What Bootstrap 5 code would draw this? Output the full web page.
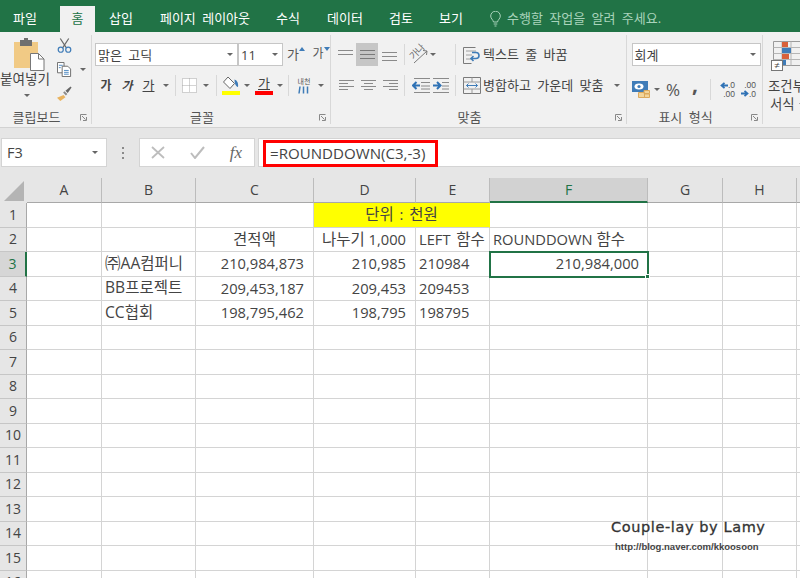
<!DOCTYPE html>
<html lang="ko">
<head>
<meta charset="utf-8">
<title>Excel</title>
<link href="https://cdn.jsdelivr.net/npm/bootstrap@5.3.0/dist/css/bootstrap.min.css" rel="stylesheet">
<style>
html,body{height:578px;overflow:hidden}
body{font-family:"Open Sans","Noto Sans CJK KR",sans-serif;font-size:13px;color:#444;background:#fff;width:800px}
svg{display:block}
/* tabs */
.xl-tabs{background:#217346;height:32px;grid-template-columns:60px 35px 52px 116px 50px 64px 48px 52px 1fr;align-items:end;word-spacing:3px}
.xl-tab{height:26px;line-height:25px;padding:0;text-align:center;color:#fff;text-decoration:none;display:block}
.xl-tab.first{width:50px}
.xl-tab.on{background:#f1f1f1;color:#217346}
.xl-tip{color:#a9d3bb;height:26px;padding-left:13px;gap:6px}
/* ribbon */
.xl-ribbon{height:96px;background:#f1f1f1;border-bottom:1px solid #d2d2d2;word-spacing:3px}
.rb-group{height:89px;margin-top:3px;border-right:1px solid #d8d8d8;flex:none}
.g-clip{width:92px}.g-font{width:239px}.g-align{width:296px}.g-num{width:136px}.g-style{flex:1;overflow:hidden;border-right:0;position:relative}
.rb-body{height:73px;padding-top:8px}
.rb-label{height:18px;display:grid;grid-template-columns:1fr auto 1fr;align-items:center;color:#555;line-height:18px;padding-right:18px}
.rb-launch{justify-self:end;margin-right:-14px}
.rb-row{display:grid;height:23px;align-items:center;justify-items:center}
.rb-row+.rb-row{margin-top:8px}
.caret-dn{width:0;height:0;border-left:3px solid transparent;border-right:3px solid transparent;border-top:3px solid #666;display:block}
.rb-sep{width:1px;height:21px;background:#d8d8d8}
.rb-combo{background:#fff;border:1px solid #c6c6c6;height:23px;padding:0 4px 0 2px;line-height:20px;color:#444}
.clip-wrap{padding-top:3px;height:73px;grid-template-columns:53px 1fr}
.clip-main{width:53px}
.clip-pic{margin-left:5px}
.clip-name{line-height:15px;margin-top:0;white-space:nowrap;font-size:13.6px;width:53px;padding-left:0}
.clip-main .caret-dn{margin-top:8px}
.clip-small{padding:0 0 0 4px;gap:9px}
.font-r1{grid-template-columns:3px 143px 45px 26px 24px 1fr;justify-items:stretch}
.font-r1>.grow-a{justify-self:center}
.font-r2{grid-template-columns:4px 20px 22px 21px 13px 6px 23px 10px 10px 20px 12px 22px 10px 6px 26px 7px 1fr}
.grow-a{display:flex;align-items:flex-start;line-height:16px;height:18px;font-size:12px;color:#555;gap:0}
.grow-a.lg{font-size:13px}
.grow-a svg{margin-top:1px}
.bv{font-weight:700;font-size:12px;line-height:1;color:#444}
.bv.i{font-style:italic}
.bv.u{text-decoration:underline;font-weight:400;font-size:13px}
.swatch{width:18px;display:flex;flex-direction:column;align-items:center}
.swatch b{display:block;width:18px;height:4px}
.swatch .yl{background:#ff0}
.swatch .rd{background:#f00}
.swatch .gl{line-height:14px;font-size:13px;height:15px;text-decoration:underline;text-underline-offset:1px}
.nae{display:flex;flex-direction:column;align-items:center}
.nae span{font-size:7px;line-height:8px;word-spacing:0;color:#555}
.al-r1{grid-template-columns:7px 15px 3px 22px 4px 15px 7px 1px 5px 20px 0 6px 19px 1px 7px 17px 3px 1fr}
.al-r2{grid-template-columns:8px 15px 7px 15px 7px 15px 6px 1px 6px 19px 2px 19px 4px 1px 7px 17px 3px 1fr 9px 9px 6px}
.al-r1>span.tx,.al-r2>span.tx{justify-self:start;white-space:nowrap;color:#444}
.al-on{width:22px;height:23px;background:#c6c6c6;display:flex;align-items:center;justify-content:center}
.orient{width:20px;height:20px;position:relative}
.orient span{position:absolute;left:-1px;top:1px;font-size:9.5px;line-height:12px;color:#666;transform:rotate(-45deg);white-space:nowrap;word-spacing:0;letter-spacing:-.5px}
.orient svg{position:absolute;left:0;top:0}
.num-r1{padding-left:3px;display:block}
.num-r1 .rb-combo{width:129px}
.num-r2{grid-template-columns:4px 19px 3px 8px 24px 0 20px 5px 1px 8px 16px 5px 16px 1fr}
.pct{font-size:17px;line-height:1;color:#555}
.cma{font-size:21px;font-weight:700;line-height:1;color:#555;padding-bottom:10px}
.deci{font-family:"Liberation Sans",sans-serif;font-size:8.5px;line-height:8.5px;width:16px;color:#555}
.deci div{display:flex;justify-content:flex-end;align-items:center;gap:0}
.sty-pad{padding-left:10px}
.sty-pic{margin-top:6px}
.sty-neq{position:absolute;left:8px;top:25px;width:12px;height:11px;background:#fff;border:1px solid #777;font-size:10px;line-height:9px;text-align:center;color:#444}
.sty-name{margin-top:11px;margin-left:-5px;line-height:18px;white-space:nowrap;font-size:13.4px}
.sty-line2{padding-left:2px;display:flex;align-items:center;gap:4px}
/* formula */
.xl-fbar{background:#e6e6e6;height:50px;padding:10px 0 0 1px}
.xl-namebox{width:106px;height:29px;background:#fff;border:1px solid #d4d4d4;padding:0 8px 0 5px;font-size:14.5px;color:#444}
.xl-dots{width:32px;height:29px;gap:3px}
.xl-dots i{width:2px;height:2px;background:#8a8a8a;display:block}
.xl-fxbox{width:116px;height:29px;background:#fff;border:1px solid #d4d4d4;padding:0 12px 0 11px}
.xl-fx{font-family:"Liberation Serif",serif;font-style:italic;font-size:17px;color:#666;line-height:1}
.xl-input{height:29px;background:#fff;border:1px solid #d4d4d4;border-right:0;margin-left:3px;flex:1;padding:1px 0 0 4px}
.xl-redbox{width:175px;height:27px;border:3px solid #f00;padding-left:4px;font-size:15.1px;line-height:20px;color:#444;white-space:nowrap}
/* sheet */
.xl-grid{grid-template-columns:27px 75px 94px 118px 102px 74px 158px 75px 74px 1fr;grid-template-rows:25px repeat(16,24.5px);font-size:14.7px;color:#444;line-height:1}
.c{border-right:1px solid #d4d4d4;border-bottom:1px solid #d4d4d4;display:flex;align-items:center;padding:0 3px;white-space:nowrap;overflow:visible;min-width:0}
.c.r{justify-content:flex-end;padding-right:9px}
.c.m{justify-content:center}
.ko{font-size:15.5px}
.wide{word-spacing:2px}
.lat{font-size:15.6px}
.h{background:#e6e6e6;border-right-color:#bcbcbc;border-bottom-color:#a8a8a8;justify-content:center;font-size:14px;color:#444;padding:0}
.rh{background:#e6e6e6;border-right-color:#a8a8a8;border-bottom-color:#c6c6c6;justify-content:center;font-size:14px;color:#444;padding:0}
.h.on{background:#d2d2d2;color:#217346;border-bottom:2px solid #217346}
.rh.on{background:#d6d6d6;color:#217346;border-right:2px solid #217346}
.ylw{background:#ff0;grid-column:span 2;justify-content:center;border-right-color:#ff0}
.sel{position:relative;padding-right:8px!important}
.sel::before{content:"";position:absolute;left:-1px;top:-1px;right:-2px;bottom:-2px;border:2px solid #217346;pointer-events:none}
.sel::after{content:"";position:absolute;right:-3px;bottom:-3px;background:#217346;border:1px solid #fff;box-sizing:content-box;width:3px;height:3px}
.xl-sheet{position:relative}
.mark-a{position:absolute;left:611px;top:339px;font-family:"DejaVu Sans",sans-serif;font-size:14.5px;letter-spacing:.6px;color:#333;white-space:nowrap;line-height:20px;-webkit-text-stroke:.3px #333}
.mark-b{position:absolute;left:615px;top:363px;font-family:"Liberation Sans",sans-serif;font-weight:700;font-size:9.5px;color:#444;white-space:nowrap;line-height:12px}
.corner{width:100%;height:100%;padding:3px 1px 2px 4px}
</style>
</head>
<body>

<nav class="xl-tabs d-grid">
  <a class="xl-tab first" href="#">파일</a>
  <a class="xl-tab on" href="#">홈</a>
  <a class="xl-tab" href="#">삽입</a>
  <a class="xl-tab" href="#">페이지 레이아웃</a>
  <a class="xl-tab" href="#">수식</a>
  <a class="xl-tab" href="#">데이터</a>
  <a class="xl-tab" href="#">검토</a>
  <a class="xl-tab" href="#">보기</a>
  <div class="xl-tip d-flex align-items-center">
    <svg width="11" height="16" viewBox="0 0 11 16" fill="none" stroke="#a9d3bb"><path d="M3.500 11C3 8.500.7 7.800.7 5a4.800 4.800 0 0 1 9.600 0c0 2.800-2.300 3.500-2.800 6zM3.700 13h3.600M4.500 15h2"/></svg>
    <span>수행할 작업을 알려 주세요.</span>
  </div>
</nav>

<section class="xl-ribbon d-flex">
  <!-- clipboard -->
  <div class="rb-group g-clip">
    <div class="d-grid clip-wrap">
      <div class="clip-main d-flex flex-column align-items-center">
        <svg class="clip-pic" width="31" height="33" viewBox="0 0 31 33"><rect x="0" y="4" width="24" height="26" fill="#f1ca85"/><rect x="6" y="2" width="12" height="6" fill="#6f6f6f"/><rect x="10" y="0" width="4" height="3" fill="#6f6f6f"/><path d="M16.500 15.500h8l5.500 5.500v11.500h-13.500z" fill="#fff" stroke="#777"/><path d="M24.500 15.500v5.500h5.500" fill="none" stroke="#777"/></svg>
        <div class="clip-name">붙여넣기</div>
        <i class="caret-dn"></i>
      </div>
      <div class="clip-small d-flex flex-column">
        <svg width="15" height="15" viewBox="0 0 16 16" fill="none"><path d="M3.500.5l6.500 10M12.500.5L6 10.500" stroke="#6a6a6a" stroke-width="1.300"/><circle cx="4" cy="12.500" r="2.700" stroke="#3f7cb8" stroke-width="1.300"/><circle cx="12" cy="12.500" r="2.700" stroke="#3f7cb8" stroke-width="1.300"/></svg>
        <div class="d-flex align-items-center gap-2">
          <svg width="15" height="15" viewBox="0 0 16 16" fill="#fff" stroke="#6a6a6a"><path d="M.5.5h7v11h-7z"/><path d="M5.500 4.500h6l3 3v8h-9z"/><path d="M2 3.500h4M2 6h2M7.500 9h5M7.500 11h5M7.500 13h5" stroke="#4a86c0"/></svg>
          <i class="caret-dn"></i>
        </div>
        <svg width="15" height="15" viewBox="0 0 16 16"><path d="M7 9.500l-7 3 3.500 3.500 5.500-4z" fill="#e9b35f"/><path d="M6.500 7l3 3 1.500-1.500-3-3z" fill="#8a8a8a"/><path d="M9 5l2.500 2.500L15.500 1.500 14.500.5z" fill="#666"/></svg>
      </div>
    </div>
    <div class="rb-label"><i></i><span>클립보드</span>
      <svg class="rb-launch" width="7" height="7" viewBox="0 0 7 7" fill="none" stroke="#888"><path d="M.5 6.500V.5h6M2 2l3.500 3.500M6.500 3v3.500H3"/></svg></div>
  </div>

  <!-- font -->
  <div class="rb-group g-font">
    <div class="rb-body">
      <div class="rb-row font-r1">
        <i></i>
        <div class="rb-combo d-flex align-items-center justify-content-between"><span>맑은 고딕</span><i class="caret-dn"></i></div>
        <div class="rb-combo d-flex align-items-center justify-content-between"><span>11</span><i class="caret-dn"></i></div>
        <div class="grow-a lg"><span>가</span><svg width="6" height="4" viewBox="0 0 6 4"><path d="M3 0l3 4H0z" fill="#3f7cb8"/></svg></div>
        <div class="grow-a"><span>가</span><svg width="6" height="4" viewBox="0 0 6 4"><path d="M3 4L0 0h6z" fill="#3f7cb8"/></svg></div>
      </div>
      <div class="rb-row font-r2">
        <i></i>
        <span class="bv">가</span><span class="bv i">가</span><span class="bv u">가</span><i class="caret-dn"></i>
        <i class="rb-sep"></i>
        <svg width="15" height="15" viewBox="0 0 15 15" fill="#fff" stroke="#a8a8a8" stroke-dasharray="1 1"><path d="M.5.500h14v14H.5zM7.500.500v14M.5 7.500h14"/></svg>
        <i class="caret-dn"></i>
        <i class="rb-sep"></i>
        <div class="swatch"><svg width="16" height="15" viewBox="0 0 16 15"><path d="M5 1l6.500 6.500L7 12.500.5 6z" fill="#fff" stroke="#666"/><path d="M11.500 3.500c3 1 4 4 3.500 7.500-2.500-.5-3.500-4-3.500-7.500z" fill="#3f7cb8"/></svg><b class="yl"></b></div>
        <i class="caret-dn"></i>
        <div class="swatch"><span class="gl">가</span><b class="rd"></b></div>
        <i class="caret-dn"></i>
        <i class="rb-sep"></i>
        <div class="nae"><span>내천</span><svg width="11" height="8" viewBox="0 0 11 8"><path d="M2 .5L1 7.500M5.500.5v7M9.500.5v7" stroke="#3f7cb8" stroke-width="1.500"/></svg></div>
        <i class="caret-dn"></i>
      </div>
    </div>
    <div class="rb-label"><i></i><span>글꼴</span>
      <svg class="rb-launch" width="7" height="7" viewBox="0 0 7 7" fill="none" stroke="#888"><path d="M.5 6.500V.5h6M2 2l3.500 3.500M6.500 3v3.500H3"/></svg></div>
  </div>

  <!-- alignment -->
  <div class="rb-group g-align">
    <div class="rb-body">
      <div class="rb-row al-r1">
        <i></i>
        <svg width="15" height="12" viewBox="0 0 15 12" stroke="#8a8a8a"><path d="M0 1.500h15M0 5.500h15"/></svg>
        <i></i>
        <div class="al-on"><svg width="15" height="10" viewBox="0 0 15 10" stroke="#7a7a7a"><path d="M0 .5h15M0 4.500h15M0 8.500h15"/></svg></div>
        <i></i>
        <svg width="15" height="12" viewBox="0 0 15 12" stroke="#8a8a8a"><path d="M0 3.500h15M0 7.500h15M0 11.500h15"/></svg>
        <i></i>
        <i class="rb-sep"></i>
        <i></i>
        <div class="orient"><span>가나</span><svg width="20" height="20" viewBox="0 0 20 20" fill="none" stroke="#7a7a7a"><path d="M4 18L17 6M13 5.500l4 .5-.5 4"/></svg></div>
        <i></i>
        <i class="caret-dn"></i>
        <i></i>
        <i class="rb-sep"></i>
        <i></i>
        <svg width="17" height="18" viewBox="0 0 17 18" fill="none"><path d="M.5 1.500h12M.5 17.500h8M.5 1.500v16" stroke="#7a7a7a"/><path d="M3 5h10M3 9h6M3 13h5" stroke="#a0a0a0"/><path d="M9 12.500h4c4 0 4-6 0-6H9M10.500 10l-2.500 2.500 2.500 2.500" stroke="#3f7cb8" stroke-width="1.600"/></svg>
        <i></i>
        <span class="tx">텍스트 줄 바꿈</span>
      </div>
      <div class="rb-row al-r2">
        <i></i>
        <svg width="15" height="11" viewBox="0 0 15 11" stroke="#8a8a8a"><path d="M0 .5h15M0 3.500h9M0 6.500h15M0 9.500h9"/></svg>
        <i></i>
        <svg width="15" height="11" viewBox="0 0 15 11" stroke="#8a8a8a"><path d="M0 .5h15M3 3.500h9M0 6.500h15M3 9.500h9"/></svg>
        <i></i>
        <svg width="15" height="11" viewBox="0 0 15 11" stroke="#8a8a8a"><path d="M0 .5h15M6 3.500h9M0 6.500h15M6 9.500h9"/></svg>
        <i></i>
        <i class="rb-sep"></i>
        <i></i>
        <svg width="18" height="15" viewBox="0 0 18 15" fill="none"><path d="M2 .5h16M9 4.500h9M9 8h9M9 11h9M2 14.500h16" stroke="#8a8a8a"/><path d="M8 7.500H1.500M4.500 4L1 7.500 4.500 11" stroke="#2f72b5" stroke-width="2"/></svg>
        <i></i>
        <svg width="18" height="15" viewBox="0 0 18 15" fill="none"><path d="M0 .5h16M9 4.500h7M9 8h7M9 11h7M0 14.500h16" stroke="#8a8a8a"/><path d="M0 7.500h7M4 4l3.500 3.500L4 11" stroke="#2f72b5" stroke-width="2"/></svg>
        <i></i>
        <i class="rb-sep"></i>
        <i></i>
        <svg width="18" height="17" viewBox="0 0 18 17" fill="none"><path d="M.5.500h17v16H.5z" stroke="#7a7a7a"/><path d="M.5 5h17M.5 12h17M9 .5V5M9 12v4.500" stroke="#9a9a9a"/><path d="M3.500 8.500h11M5.500 6.500l-2 2 2 2M12.500 6.500l2 2-2 2" stroke="#3f7cb8"/></svg>
        <i></i>
        <span class="tx">병합하고 가운데 맞춤</span>
        <i></i>
        <i class="caret-dn"></i>
      </div>
    </div>
    <div class="rb-label"><i></i><span>맞춤</span>
      <svg class="rb-launch" width="7" height="7" viewBox="0 0 7 7" fill="none" stroke="#888"><path d="M.5 6.500V.5h6M2 2l3.500 3.500M6.500 3v3.500H3"/></svg></div>
  </div>

  <!-- number -->
  <div class="rb-group g-num">
    <div class="rb-body">
      <div class="rb-row num-r1">
        <div class="rb-combo d-flex align-items-center justify-content-between"><span>회계</span><i class="caret-dn"></i></div>
      </div>
      <div class="rb-row num-r2">
        <i></i>
        <svg width="18" height="19" viewBox="0 0 18 19"><rect x="0" y="1" width="16" height="11" fill="#3f7cb8"/><ellipse cx="7" cy="6.500" rx="4.500" ry="3" fill="#fff"/><circle cx="7" cy="6.500" r="1.600" fill="#3f7cb8"/><path d="M6.500 12.500h6v5h-6zM12 10.500h5.500v3H12zM12.500 14h5v3.500h-5z" fill="#f3d59b" stroke="#dca95c"/></svg>
        <i></i>
        <i class="caret-dn"></i>
        <span class="pct">%</span>
        <i></i>
        <span class="cma">,</span>
        <i></i>
        <i class="rb-sep"></i>
        <i></i>
        <div class="deci"><div><svg width="8" height="7" viewBox="0 0 8 7" fill="none" stroke="#2f72b5" stroke-width="1.800"><path d="M8 3.500H2M4.500.8L1.500 3.500l3 2.700"/></svg><span>.0</span></div><div><span>.00</span></div></div>
        <i></i>
        <div class="deci"><div><span>.00</span></div><div><svg width="8" height="7" viewBox="0 0 8 7" fill="none" stroke="#2f72b5" stroke-width="1.800"><path d="M0 3.500h6M3.500.8l3 2.700-3 2.700"/></svg><span>.0</span></div></div>
      </div>
    </div>
    <div class="rb-label"><i></i><span>표시 형식</span>
      <svg class="rb-launch" width="7" height="7" viewBox="0 0 7 7" fill="none" stroke="#888"><path d="M.5 6.500V.5h6M2 2l3.500 3.500M6.500 3v3.500H3"/></svg></div>
  </div>

  <!-- styles -->
  <div class="rb-group g-style">
    <div class="sty-pad">
      <svg class="sty-pic" width="28" height="25" viewBox="0 0 28 25" fill="none"><path d="M.5.500h27v24H.5z" stroke="#9a9a9a"/><path d="M.5 6.500h27M.5 12.500h27M.5 18.500h27M9 .5v24M18 .5v24" stroke="#b5b5b5"/><rect x="9" y="1" width="6" height="5" fill="#d9613a"/><rect x="9" y="7" width="9" height="5" fill="#3f7cb8"/><rect x="9" y="13" width="7" height="5" fill="#d9613a"/><rect x="9" y="19" width="4" height="5" fill="#3f7cb8"/></svg>
      <div class="sty-neq">≠</div>
      <div class="sty-name">조건부<div class="sty-line2">서식 <i class="caret-dn"></i></div></div>
    </div>
  </div>
</section>

<section class="xl-fbar d-flex align-items-start">
  <div class="xl-namebox d-flex align-items-center justify-content-between"><span>F3</span><i class="caret-dn"></i></div>
  <div class="xl-dots d-flex flex-column align-items-center justify-content-center"><i></i><i></i><i></i></div>
  <div class="xl-fxbox d-flex align-items-center justify-content-between">
    <svg width="14" height="13" viewBox="0 0 14 13" stroke="#bdbdbd" stroke-width="1.800"><path d="M1 1l12 11M13 1L1 12"/></svg>
    <svg width="15" height="13" viewBox="0 0 15 13" fill="none" stroke="#bdbdbd" stroke-width="2"><path d="M1 7l4 5 9-11"/></svg>
    <span class="xl-fx">fx</span>
  </div>
  <div class="xl-input"><div class="xl-redbox">=ROUNDDOWN(C3,-3)</div></div>
</section>

<section class="xl-sheet">
  <div class="xl-grid d-grid">
    <div class="h corner"><svg width="20" height="20" viewBox="0 0 20 20"><path d="M20 0v20H0z" fill="#b4b4b4"/></svg></div>
    <div class="c h">A</div><div class="c h">B</div><div class="c h">C</div><div class="c h">D</div><div class="c h">E</div><div class="c h on">F</div><div class="c h">G</div><div class="c h">H</div><div class="c h"></div>

    <div class="c rh">1</div><div class="c"></div><div class="c"></div><div class="c"></div><div class="c ylw"><span class="wide"><span class="ko">단위</span> : <span class="ko">천원</span></span></div><div class="c"></div><div class="c"></div><div class="c"></div><div class="c"></div>
    <div class="c rh">2</div><div class="c"></div><div class="c"></div><div class="c m"><span class="ko">견적액</span></div><div class="c r"><span><span class="ko">나누기</span> 1,000</span></div><div class="c"><span class="wide">LEFT <span class="ko">함수</span></span></div><div class="c"><span>ROUNDDOWN <span class="ko">함수</span></span></div><div class="c"></div><div class="c"></div><div class="c"></div>
    <div class="c rh on">3</div><div class="c"></div><div class="c"><span><span class="ko">㈜</span><span class="lat">AA</span><span class="ko">컴퍼니</span></span></div><div class="c r">210,984,873</div><div class="c r">210,985</div><div class="c">210984</div><div class="c r sel">210,984,000</div><div class="c"></div><div class="c"></div><div class="c"></div>
    <div class="c rh">4</div><div class="c"></div><div class="c"><span><span class="lat">BB</span><span class="ko">프로젝트</span></span></div><div class="c r">209,453,187</div><div class="c r">209,453</div><div class="c">209453</div><div class="c"></div><div class="c"></div><div class="c"></div><div class="c"></div>
    <div class="c rh">5</div><div class="c"></div><div class="c"><span><span class="lat">CC</span><span class="ko">협회</span></span></div><div class="c r">198,795,462</div><div class="c r">198,795</div><div class="c">198795</div><div class="c"></div><div class="c"></div><div class="c"></div><div class="c"></div>
    <div class="c rh">6</div><div class="c"></div><div class="c"></div><div class="c"></div><div class="c"></div><div class="c"></div><div class="c"></div><div class="c"></div><div class="c"></div><div class="c"></div>
    <div class="c rh">7</div><div class="c"></div><div class="c"></div><div class="c"></div><div class="c"></div><div class="c"></div><div class="c"></div><div class="c"></div><div class="c"></div><div class="c"></div>
    <div class="c rh">8</div><div class="c"></div><div class="c"></div><div class="c"></div><div class="c"></div><div class="c"></div><div class="c"></div><div class="c"></div><div class="c"></div><div class="c"></div>
    <div class="c rh">9</div><div class="c"></div><div class="c"></div><div class="c"></div><div class="c"></div><div class="c"></div><div class="c"></div><div class="c"></div><div class="c"></div><div class="c"></div>
    <div class="c rh">10</div><div class="c"></div><div class="c"></div><div class="c"></div><div class="c"></div><div class="c"></div><div class="c"></div><div class="c"></div><div class="c"></div><div class="c"></div>
    <div class="c rh">11</div><div class="c"></div><div class="c"></div><div class="c"></div><div class="c"></div><div class="c"></div><div class="c"></div><div class="c"></div><div class="c"></div><div class="c"></div>
    <div class="c rh">12</div><div class="c"></div><div class="c"></div><div class="c"></div><div class="c"></div><div class="c"></div><div class="c"></div><div class="c"></div><div class="c"></div><div class="c"></div>
    <div class="c rh">13</div><div class="c"></div><div class="c"></div><div class="c"></div><div class="c"></div><div class="c"></div><div class="c"></div><div class="c"></div><div class="c"></div><div class="c"></div>
    <div class="c rh">14</div><div class="c"></div><div class="c"></div><div class="c"></div><div class="c"></div><div class="c"></div><div class="c"></div><div class="c"></div><div class="c"></div><div class="c"></div>
    <div class="c rh">15</div><div class="c"></div><div class="c"></div><div class="c"></div><div class="c"></div><div class="c"></div><div class="c"></div><div class="c"></div><div class="c"></div><div class="c"></div>
    <div class="c rh">16</div><div class="c"></div><div class="c"></div><div class="c"></div><div class="c"></div><div class="c"></div><div class="c"></div><div class="c"></div><div class="c"></div><div class="c"></div>
  </div>
  <div class="mark-a">Couple-lay by Lamy</div>
  <div class="mark-b">http://blog.naver.com/kkoosoon</div>
</section>

<script src="https://cdn.jsdelivr.net/npm/bootstrap@5.3.0/dist/js/bootstrap.bundle.min.js"></script>
</body>
</html>
